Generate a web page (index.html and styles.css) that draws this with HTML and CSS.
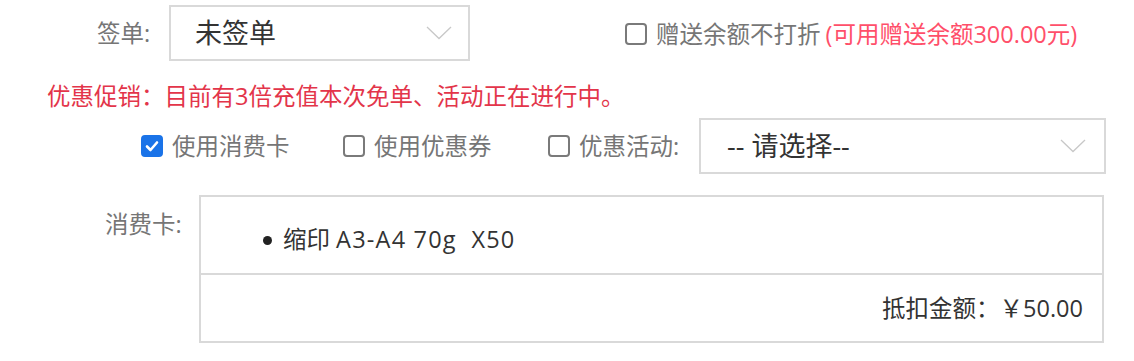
FILE: index.html
```html
<!DOCTYPE html>
<html lang="zh-CN">
<head>
<meta charset="utf-8">
<title>签单</title>
<link rel="stylesheet" href="styles.css">
</head>
<body>
<div class="form">
  <div class="row row-sign">
    <span class="label label-sign">签单:</span>
    <div class="select select-sign">
      <span class="select-text">未签单</span>
      <svg class="chev" width="26" height="14" viewBox="0 0 26 14"><polyline points="1,1 13,12.5 25,1" fill="none" stroke="#c8c8c8" stroke-width="1.3"/></svg>
    </div>
    <label class="check check-gift">
      <span class="box"></span>
      <span class="check-text">赠送余额不打折</span>
      <span class="gift-note">(可用赠送余额300.00元)</span>
    </label>
  </div>
  <div class="promo">优惠促销：目前有3倍充值本次免单、活动正在进行中。</div>
  <div class="row row-opts">
    <label class="check check-card">
      <span class="box box-on"><svg width="16" height="16" viewBox="0 0 16 16"><polyline points="3,8.5 6.5,12 13,4.5" fill="none" stroke="#fff" stroke-width="2.6" stroke-linecap="round" stroke-linejoin="round"/></svg></span>
      <span class="check-text">使用消费卡</span>
    </label>
    <label class="check check-coupon">
      <span class="box"></span>
      <span class="check-text">使用优惠券</span>
    </label>
    <label class="check check-activity">
      <span class="box"></span>
      <span class="check-text">优惠活动:</span>
    </label>
    <div class="select select-activity">
      <span class="select-text">-- 请选择--</span>
      <svg class="chev" width="26" height="14" viewBox="0 0 26 14"><polyline points="1,1 13,12.5 25,1" fill="none" stroke="#c8c8c8" stroke-width="1.3"/></svg>
    </div>
  </div>
  <div class="row row-card">
    <span class="label label-card">消费卡:</span>
    <div class="card">
      <ul class="card-list">
        <li>缩印 <span class="spec">A3-A4 70g&nbsp;&nbsp;X50</span></li>
      </ul>
      <div class="card-total">抵扣金额：￥50.00</div>
    </div>
  </div>
</div>
</body>
</html>
```

FILE: styles.css
```css
* { box-sizing: border-box; }
html, body { margin: 0; padding: 0; background: #fff; }
body {
  font-family: "Open Sans", "Noto Sans CJK SC", sans-serif;
  font-size: 23.5px;
  color: #333;
  width: 1134px;
  height: 361px;
  overflow: hidden;
}
.form { display: flex; flex-direction: column; padding-top: 5px; }
.row { display: flex; align-items: center; }
.label { color: #767676; line-height: 30px; }
.label-sign { margin-left: 97px; width: 72px; flex: none; }
.select {
  display: flex;
  align-items: center;
  justify-content: space-between;
  height: 56px;
  border: 2px solid #d9d9d9;
  background: #fff;
  padding: 0 16px 0 24px;
  flex: none;
}
.select-text { font-size: 27px; color: #333; line-height: 32px; }
.select-sign { width: 301px; }
.chev { display: block; }
.check { display: flex; align-items: center; cursor: pointer; flex: none; }
.box {
  width: 22px;
  height: 22px;
  border: 2px solid #7a7a7a;
  border-radius: 4px;
  display: flex;
  align-items: center;
  justify-content: center;
  flex: none;
}
.box-on { background: #1a73e8; border-color: #1a73e8; }
.check-text { color: #767676; margin-left: 9px; line-height: 30px; }
.check-gift { margin-left: 155px; margin-top: 2px; }
.gift-note { color: #ff4f6a; margin-left: 5px; line-height: 30px; }
.promo {
  color: #e3354a;
  margin-left: 47px;
  margin-top: 20px;
  line-height: 30px;
}
.row-opts { margin-top: 7px; margin-left: 141px; }
.check-card { width: 202px; }
.check-coupon { width: 205px; }
.check-activity { width: 151px; }
.select-activity { width: 407px; height: 56px; padding-left: 26px; padding-right: 18px; }
.row-card { align-items: flex-start; margin-top: 21px; }
.label-card { margin-left: 105px; margin-top: 14px; width: 94px; flex: none; }
.card {
  width: 905px;
  border: 2px solid #d9d9d9;
  display: flex;
  flex-direction: column;
}
.card-list {
  margin: 0;
  padding: 27px 0 0 82px;
  height: 78px;
  border-bottom: 2px solid #d9d9d9;
  list-style: none;
}
.card-list li { line-height: 30px; position: relative; }
.card-list li::before {
  content: "";
  position: absolute;
  left: -20px;
  top: 12px;
  width: 9px;
  height: 9px;
  border-radius: 50%;
  background: #222;
}
.spec { letter-spacing: 1.2px; }
.card-total {
  height: 66px;
  display: flex;
  align-items: center;
  justify-content: flex-end;
  padding-right: 19px;
  line-height: 30px;
}
```
